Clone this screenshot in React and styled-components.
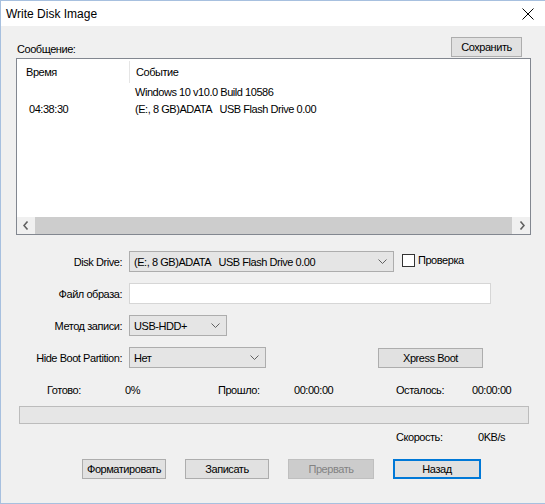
import React from 'react';
import styled, { createGlobalStyle } from 'styled-components';

const GlobalStyle = createGlobalStyle`
  html, body {
    margin: 0;
    padding: 0;
    background: #ffffff;
  }
  body {
    font-family: "Liberation Sans", Arial, sans-serif;
    font-size: 11px;
    letter-spacing: -0.45px;
    color: #000;
  }
`;

const Window = styled.div`
  width: 545px;
  height: 504px;
  box-sizing: border-box;
  border: 1px solid #a7c0df;
  border-right: none;
  display: flex;
  flex-direction: column;
  background: #f0f0f0;
`;

const TitleBar = styled.div`
  height: 25px;
  flex-shrink: 0;
  background: #ffffff;
  display: flex;
  align-items: center;
  justify-content: space-between;
  padding: 0 10px 0 5px;
`;

const Title = styled.span`
  font-size: 12px;
  letter-spacing: 0;
  color: #000;
`;

const CloseBox = styled.div`
  width: 14px;
  height: 14px;
  display: flex;
  align-items: center;
  justify-content: center;
`;

const Client = styled.div`
  flex: 1;
  display: flex;
  flex-direction: column;
`;

const MessageRow = styled.div`
  margin-top: 11px;
  height: 20px;
  display: flex;
  align-items: flex-end;
  justify-content: space-between;
  padding: 0 23px 0 16px;
`;

const MessageLabel = styled.span`
  line-height: 13px;
  margin-bottom: 1px;
`;

const Button = styled.button`
  width: ${(p) => p.$w || 84}px;
  height: 20px;
  padding: 0;
  box-sizing: border-box;
  font-family: inherit;
  font-size: 11px;
  letter-spacing: -0.45px;
  white-space: nowrap;
  overflow: visible;
  background: ${(p) => (p.$disabled ? '#cccccc' : '#e1e1e1')};
  color: ${(p) => (p.$disabled ? '#838383' : '#000')};
  border: ${(p) =>
    p.$default ? '2px solid #0078d7' : p.$disabled ? '1px solid #bfbfbf' : '1px solid #adadad'};
`;

const ListView = styled.div`
  margin: 1px 0 0 15px;
  width: 515px;
  height: 177px;
  box-sizing: border-box;
  border: 1px solid #828790;
  background: #ffffff;
  display: flex;
  flex-direction: column;
`;

const ListBody = styled.div`
  flex: 1;
`;

const HeaderRow = styled.div`
  display: flex;
  height: 24px;
  align-items: center;
  margin-top: 1px;
`;

const HeaderCell = styled.div`
  width: ${(p) => p.$w}px;
  padding-left: ${(p) => p.$pad}px;
  box-sizing: border-box;
  height: 22px;
  line-height: 22px;
  border-right: ${(p) => (p.$divider ? '1px solid #e5e5e5' : 'none')};
`;

const Row = styled.div`
  display: flex;
  height: 17px;
  line-height: 17px;
`;

const Cell = styled.div`
  width: ${(p) => p.$w}px;
  padding-left: ${(p) => p.$pad}px;
  box-sizing: border-box;
  white-space: pre;
`;

const ScrollBar = styled.div`
  height: 17px;
  display: flex;
  background: #f0f0f0;
`;

const ScrollArrow = styled.div`
  width: 17px;
  height: 17px;
  display: flex;
  align-items: center;
  justify-content: center;
`;

const ScrollThumb = styled.div`
  flex: 1;
  background: #cdcdcd;
  margin: 0 1px;
`;

const Form = styled.div`
  margin-top: 16px;
  display: flex;
  flex-direction: column;
  gap: 11px;
`;

const FormRow = styled.div`
  display: flex;
  align-items: center;
  height: 21px;
`;

const Label = styled.span`
  width: 121px;
  text-align: right;
  margin-right: 7px;
  white-space: nowrap;
`;

const Select = styled.div`
  width: ${(p) => p.$w}px;
  height: 21px;
  box-sizing: border-box;
  border: 1px solid #adadad;
  background: #e5e5e5;
  display: flex;
  align-items: center;
  justify-content: space-between;
  padding: 0 6px 0 4px;
  white-space: pre;
`;

const TextInput = styled.div`
  width: ${(p) => p.$w}px;
  height: 21px;
  box-sizing: border-box;
  border: 1px solid #d6d6d6;
  background: #ffffff;
`;

const Check = styled.label`
  display: flex;
  align-items: center;
  margin-left: 8px;
  gap: 3px;
  margin-top: -3px;
`;

const CheckBox = styled.span`
  width: 13px;
  height: 13px;
  box-sizing: border-box;
  border: 1px solid #333333;
  background: #ffffff;
`;

const StatusRow = styled.div`
  display: flex;
  margin-top: ${(p) => p.$mt}px;
  padding-left: ${(p) => p.$pl}px;
  height: 13px;
  line-height: 13px;
`;

const StatusCell = styled.span`
  width: ${(p) => p.$w}px;
  flex-shrink: 0;
`;

const Progress = styled.div`
  margin: 9px 0 0 18px;
  width: 510px;
  height: 18px;
  box-sizing: border-box;
  border: 1px solid #bcbcbc;
  background: #e6e6e6;
`;

const ButtonRow = styled.div`
  margin-top: 15px;
  padding-left: 81px;
  display: flex;
  gap: 19px;
`;

const Chevron = () => (
  <svg width="9" height="6" viewBox="0 0 9 6">
    <path d="M0.5 0.5 L4.5 4.5 L8.5 0.5" fill="none" stroke="#606060" strokeWidth="1" />
  </svg>
);

const Arrow = ({ dir }) => (
  <svg width="6" height="9" viewBox="0 0 6 9">
    <path
      d={dir === 'left' ? 'M4.5 0.5 L1 4.5 L4.5 8.5' : 'M1.5 0.5 L5 4.5 L1.5 8.5'}
      fill="none"
      stroke="#606060"
      strokeWidth="1.6"
    />
  </svg>
);

const App = () => {
  return (
    <>
      <GlobalStyle />
      <Window>
        <TitleBar>
          <Title>Write Disk Image</Title>
          <CloseBox>
            <svg width="12" height="12" viewBox="0 0 12 12">
              <path d="M0.5 0.5 L11.5 11.5 M11.5 0.5 L0.5 11.5" stroke="#000" strokeWidth="1" />
            </svg>
          </CloseBox>
        </TitleBar>
        <Client>
          <MessageRow>
            <MessageLabel>Сообщение:</MessageLabel>
            <Button $w={71}>Сохранить</Button>
          </MessageRow>
          <ListView>
            <ListBody>
              <HeaderRow>
                <HeaderCell $w={113} $pad={9} $divider>
                  Время
                </HeaderCell>
                <HeaderCell $w={300} $pad={6}>
                  Событие
                </HeaderCell>
              </HeaderRow>
              <Row>
                <Cell $w={118} $pad={12}></Cell>
                <Cell $w={380} $pad={0}>Windows 10 v10.0 Build 10586</Cell>
              </Row>
              <Row>
                <Cell $w={118} $pad={12}>04:38:30</Cell>
                <Cell $w={380} $pad={0}>{'(E:, 8 GB)ADATA   USB Flash Drive 0.00'}</Cell>
              </Row>
            </ListBody>
            <ScrollBar>
              <ScrollArrow>
                <Arrow dir="left" />
              </ScrollArrow>
              <ScrollThumb />
              <ScrollArrow>
                <Arrow dir="right" />
              </ScrollArrow>
            </ScrollBar>
          </ListView>

          <Form>
            <FormRow>
              <Label>Disk Drive:</Label>
              <Select $w={265}>
                <span>{'(E:, 8 GB)ADATA   USB Flash Drive 0.00'}</span>
                <Chevron />
              </Select>
              <Check>
                <CheckBox />
                <span>Проверка</span>
              </Check>
            </FormRow>
            <FormRow>
              <Label>Файл образа:</Label>
              <TextInput $w={362} />
            </FormRow>
            <FormRow>
              <Label>Метод записи:</Label>
              <Select $w={98}>
                <span>USB-HDD+</span>
                <Chevron />
              </Select>
            </FormRow>
            <FormRow>
              <Label>Hide Boot Partition:</Label>
              <Select $w={137}>
                <span>Нет</span>
                <Chevron />
              </Select>
              <Button $w={105} style={{ marginLeft: 112 }}>
                Xpress Boot
              </Button>
            </FormRow>
          </Form>

          <StatusRow $mt={16} $pl={46}>
            <StatusCell $w={78}>Готово:</StatusCell>
            <StatusCell $w={93}>0%</StatusCell>
            <StatusCell $w={76}>Прошло:</StatusCell>
            <StatusCell $w={102}>00:00:00</StatusCell>
            <StatusCell $w={76}>Осталось:</StatusCell>
            <StatusCell $w={60}>00:00:00</StatusCell>
          </StatusRow>
          <Progress />
          <StatusRow $mt={7} $pl={395}>
            <StatusCell $w={82}>Скорость:</StatusCell>
            <StatusCell $w={50}>0KB/s</StatusCell>
          </StatusRow>

          <ButtonRow>
            <Button $w={84}>Форматировать</Button>
            <Button $w={84}>Записать</Button>
            <Button $w={86} $disabled>
              Прервать
            </Button>
            <Button $w={88} $default>
              Назад
            </Button>
          </ButtonRow>
        </Client>
      </Window>
    </>
  );
};

export default App;
